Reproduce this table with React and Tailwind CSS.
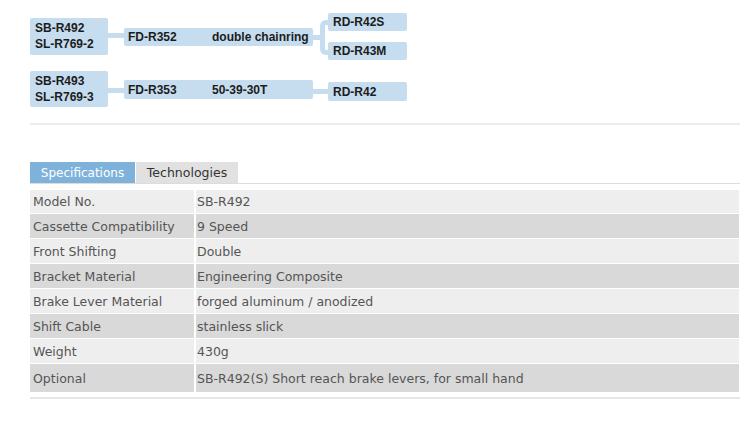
import React from "react";

const box = "bg-[#c6dcef] rounded-[2px] text-[#1c1c1c] font-bold text-[12px] leading-[16px]";
const line = "bg-[#c6dcef]";

function Diagram() {
  return (
    <div className="pl-[30px] pt-[13px] font-['Liberation_Sans',Arial,sans-serif]">
      {/* row 1 */}
      <div className="flex items-start h-[47px]">
        <div className={`${box} w-[78px] h-[37px] mt-[5px] pl-[5px] pt-[2px]`}>
          <div>SB-R492</div>
          <div>SL-R769-2</div>
        </div>
        <div className={`${line} w-[16px] h-[5px] mt-[20px]`} />
        <div className={`${box} w-[189px] h-[18px] mt-[15px] flex items-center`}>
          <span className="pl-[4px] w-[88px]">FD-R352</span>
          <span>double chainring</span>
        </div>
        <div className={`${line} w-[7px] h-[5px] mt-[22px]`} />
        <div className="w-[8px] h-[35px] mt-[7px] border-l-[5px] border-t-[5px] border-b-[5px] border-[#c6dcef] rounded-l-[6px]" />
        <div className="flex flex-col gap-[11px]">
          <div className={`${box} w-[79px] h-[18px] pl-[5px] flex items-center`}>RD-R42S</div>
          <div className={`${box} w-[79px] h-[18px] pl-[5px] flex items-center`}>RD-R43M</div>
        </div>
      </div>
      {/* row 2 */}
      <div className="flex items-start mt-[11px]">
        <div className={`${box} w-[78px] h-[36px] pl-[5px] pt-[2px]`}>
          <div>SB-R493</div>
          <div>SL-R769-3</div>
        </div>
        <div className={`${line} w-[16px] h-[5px] mt-[17px]`} />
        <div className={`${box} w-[189px] h-[19px] mt-[9px] flex items-center`}>
          <span className="pl-[4px] w-[88px]">FD-R353</span>
          <span>50-39-30T</span>
        </div>
        <div className={`${line} w-[15px] h-[5px] mt-[18px]`} />
        <div className={`${box} w-[79px] h-[19px] mt-[11px] pl-[5px] flex items-center`}>RD-R42</div>
      </div>
    </div>
  );
}

const rows = [
  ["Model No.", "SB-R492"],
  ["Cassette Compatibility", "9 Speed"],
  ["Front Shifting", "Double"],
  ["Bracket Material", "Engineering Composite"],
  ["Brake Lever Material", "forged aluminum / anodized"],
  ["Shift Cable", "stainless slick"],
  ["Weight", "430g"],
  ["Optional", "SB-R492(S) Short reach brake levers, for small hand"],
];

export default function App() {
  return (
    <div className="w-[750px] h-[446px] bg-white overflow-hidden">
      <Diagram />
      <div className="ml-[30px] w-[710px] h-[2px] bg-[#ececec] mt-[16px]" />
      <div className="ml-[30px] w-[710px] mt-[37px] font-['DejaVu_Sans',Verdana,sans-serif]">
        <div className="flex gap-[1px] border-b border-[#dcdcdc]">
          <div className="w-[105px] h-[21px] pt-[1px] bg-[#7fb2da] text-white text-[12px] flex items-center justify-center">Specifications</div>
          <div className="w-[102px] h-[21px] pt-[1px] bg-[#e1e1e1] text-[#333] text-[12.5px] flex items-center justify-center">Technologies</div>
        </div>
        <div className="mt-[6px] flex flex-col gap-[1px] text-[12.5px] text-[#555]">
          {rows.map(([k, v], i) => (
            <div
              key={k}
              className={`flex gap-[2px] ${i === 0 ? "h-[23px]" : i === rows.length - 1 ? "h-[28px]" : "h-[24px]"}`}
            >
              <div className={`w-[164px] pl-[3px] pt-[2px] flex items-center ${i % 2 === 0 ? "bg-[#eeeeee]" : "bg-[#d9d9d9]"}`}>{k}</div>
              <div className={`flex-1 mr-[1px] pl-[1px] pt-[2px] flex items-center ${i % 2 === 0 ? "bg-[#eeeeee]" : "bg-[#d9d9d9]"}`}>{v}</div>
            </div>
          ))}
        </div>
        <div className="mt-[5px] h-[2px] bg-[#e6e6e6]" />
      </div>
    </div>
  );
}
